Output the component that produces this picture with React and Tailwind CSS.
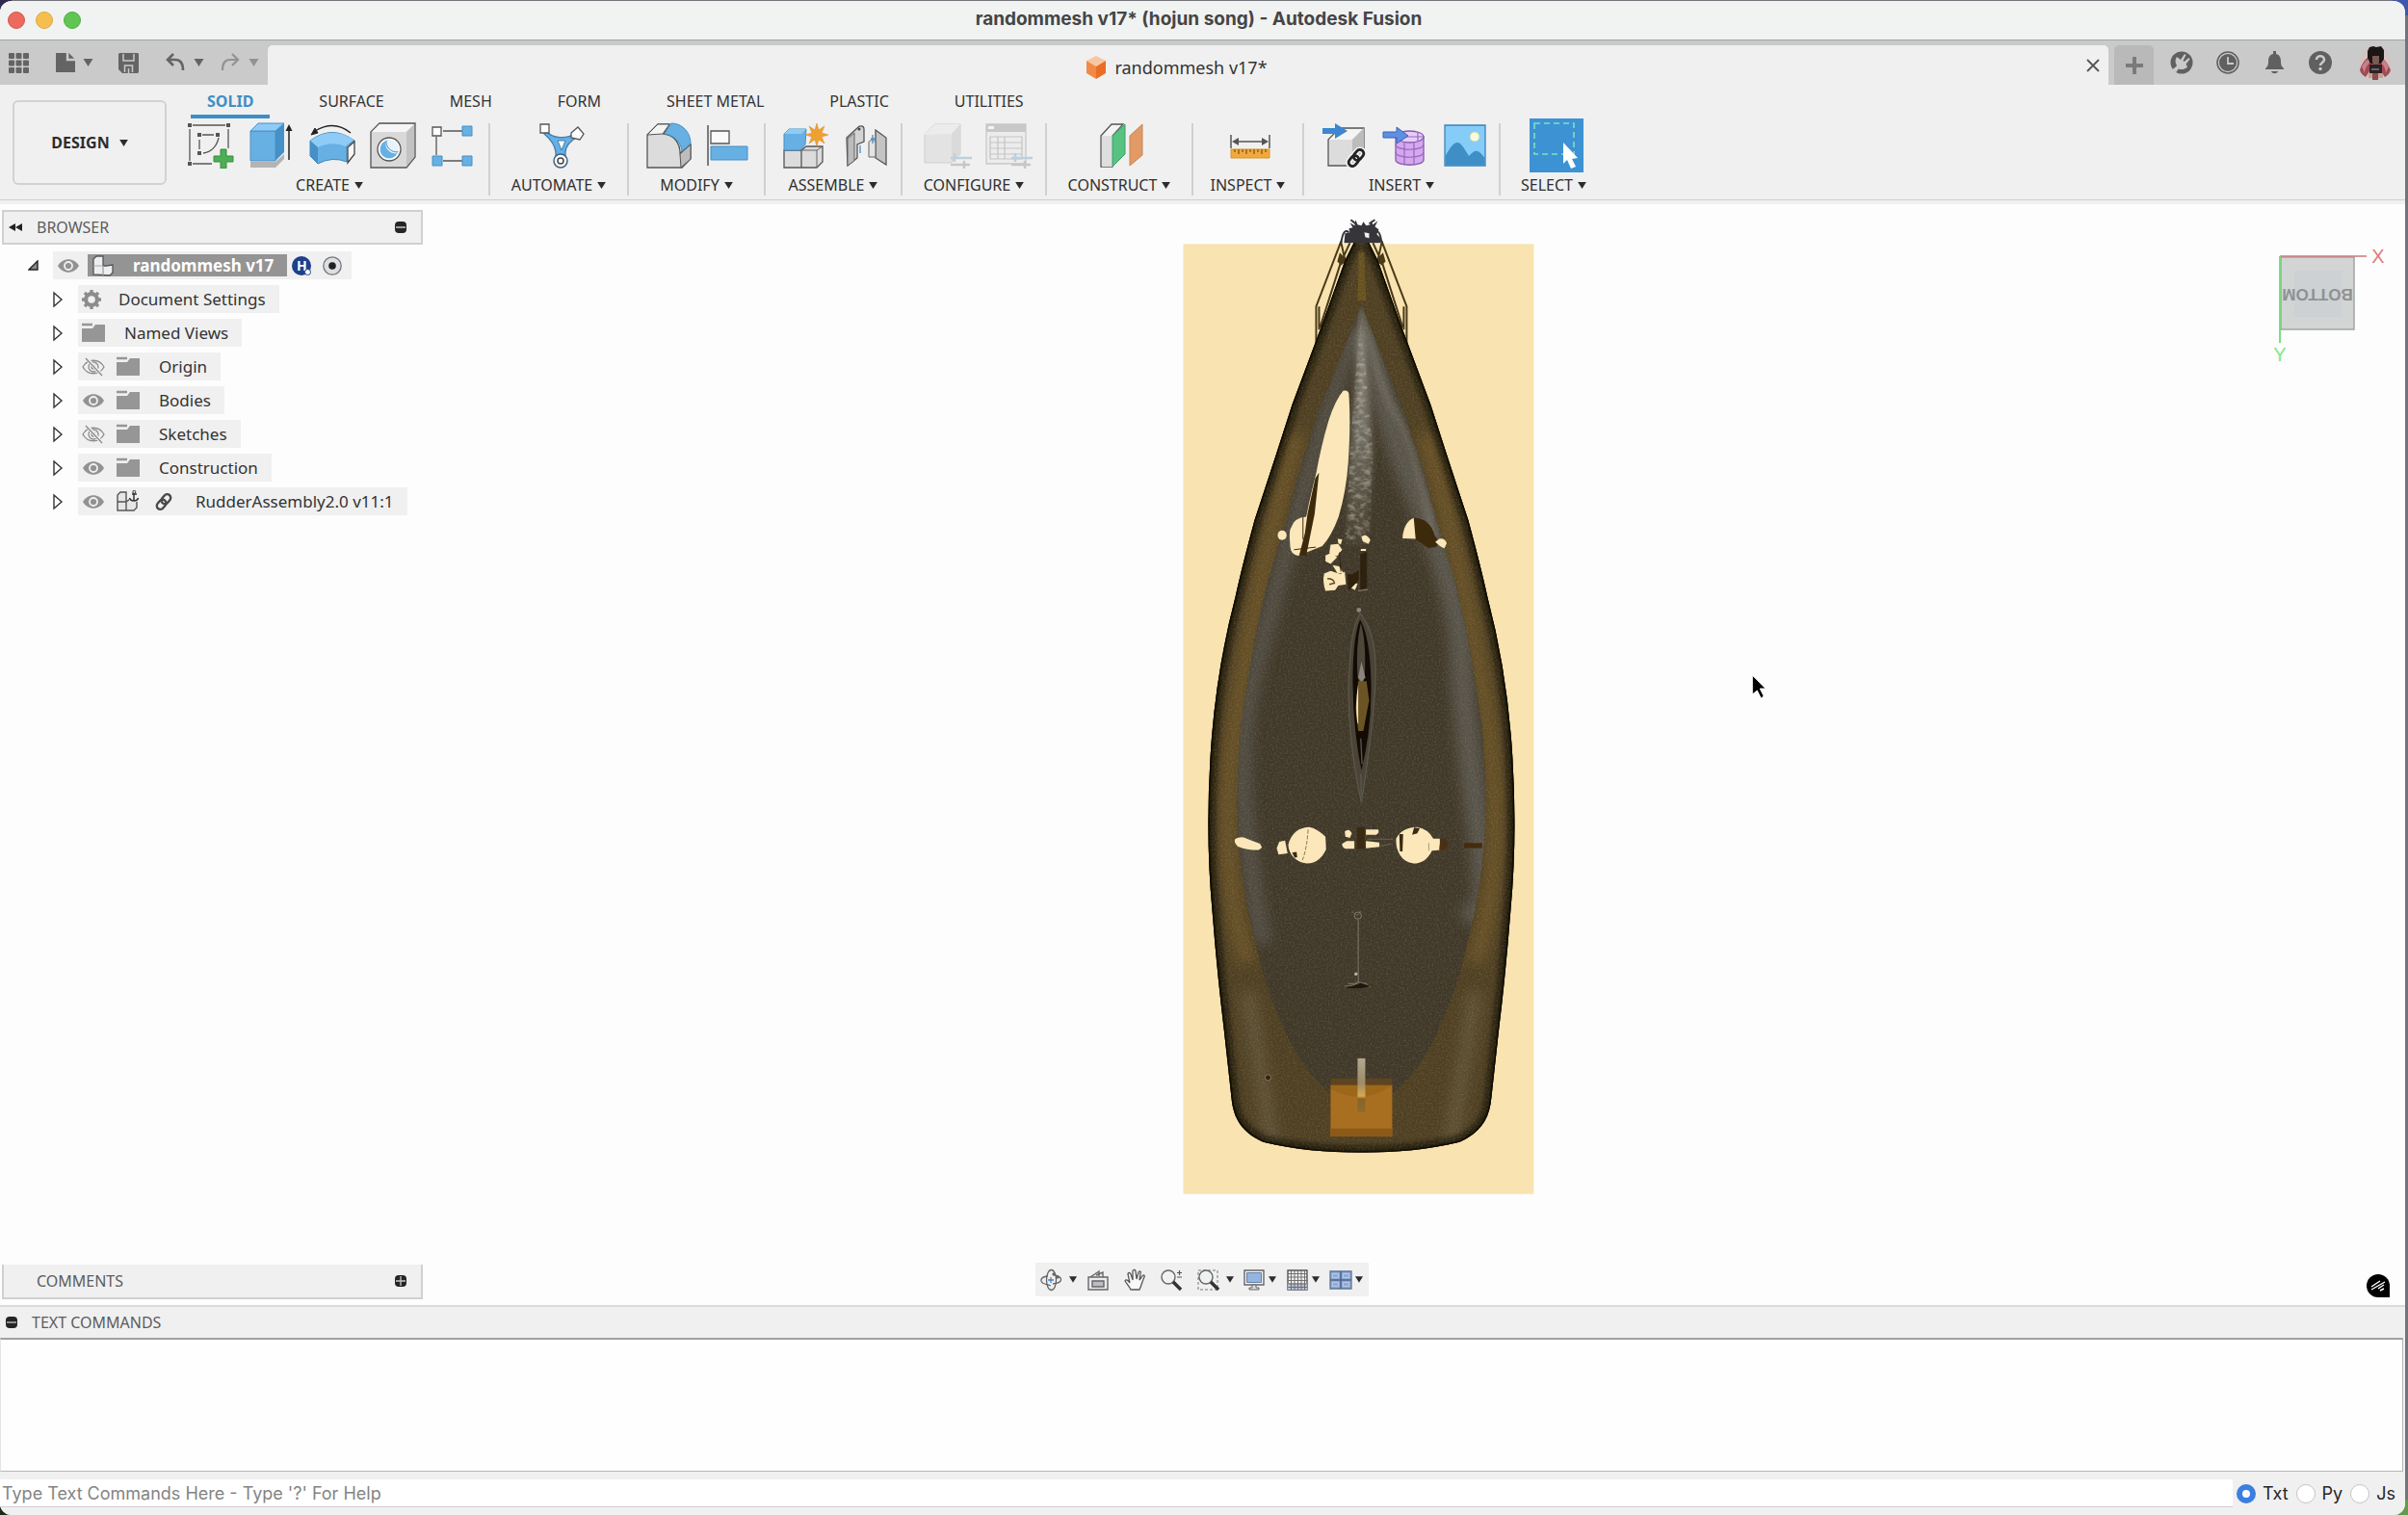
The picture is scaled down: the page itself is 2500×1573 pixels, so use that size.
import { useState } from 'react'
import clsx from 'clsx'

const TABS = ['SOLID', 'SURFACE', 'MESH', 'FORM', 'SHEET METAL', 'PLASTIC', 'UTILITIES']

// ── Small shared glyphs ──────────────────────────────────────────────────────

function Caret({ className = 'w-[10px] h-2 text-[#2c2c2c]' }) {
  return (
    <svg viewBox="0 0 10 8" className={clsx('shrink-0', className)} aria-hidden="true">
      <path d="M0 0h10L5 8z" fill="currentColor" />
    </svg>
  )
}

function Icon({ children, box = 48, className = 'w-12 h-12' }) {
  return (
    <svg viewBox={`0 0 ${box} ${box}`} className={clsx('shrink-0', className)} fill="none" aria-hidden="true">
      {children}
    </svg>
  )
}

// ── Ribbon icons ─────────────────────────────────────────────────────────────

const SketchIcon = () => (
  <Icon>
    <path d="M5 3h34M2 7v33M42 7v20M5 43h20M12 18v10M15 13h12M32 16c-2 9-8 15-16 16" stroke="#555" strokeWidth="1.3" />
    <g fill="#555">
      <path d="M0 1h4v4H0zM40 1h4v4h-4zM0 41h4v4H0zM10 11h4v4h-4zM29 11h4v4h-4zM10 30h4v4h-4z" />
    </g>
    <path d="M34 28h6v7h7v6h-7v7h-6v-7h-7v-6h7z" fill="#4caf50" stroke="#3a8a3e" strokeWidth="1" />
  </Icon>
)

const ExtrudeIcon = () => (
  <Icon>
    <path d="M2 41h26l9-8v5l-9 9H2z" fill="#b4b4b4" />
    <path d="M2 40V9h26v31z" fill="#67b0e4" stroke="#4a90c4" strokeWidth="1" />
    <path d="M2 9l8-8h27l-9 8z" fill="#8ecbf7" stroke="#4a90c4" strokeWidth="1" />
    <path d="M28 9l9-8v30l-9 9z" fill="#4590c6" />
    <path d="M42 39V6" stroke="#222" strokeWidth="1.5" />
    <path d="M42 2l3.500 7h-7z" fill="#222" />
  </Icon>
)

const RevolveIcon = () => (
  <Icon>
    <path d="M1 19Q24 2 47 19l-8 6v16Q24 35 9 43L1 35z" fill="#67b0e4" stroke="#3f86b8" strokeWidth="1" />
    <path d="M1 19Q24 3 46 18l-8 7Q24 19 9 26z" fill="#8ecbf7" />
    <path d="M1 19l8 7v17l-8-8z" fill="#4590c6" />
    <path d="M47 20l-7 6v16l7-9z" fill="#f8f8f8" stroke="#444" strokeWidth="1.300" />
    <path d="M6 9Q26-3 43 11" stroke="#222" strokeWidth="1.400" />
    <path d="M2 13l4-7 3 5z" fill="#222" stroke="#222" />
  </Icon>
)

const HoleIcon = () => (
  <Icon>
    <path d="M1 10l9-9h37v35l-9 11H1z" fill="#d9d9d9" stroke="#555" strokeWidth="1.300" />
    <path d="M2 10l8-8h36l-8 8z" fill="#f6f6f6" />
    <path d="M38 10l8-8v34l-8 10z" fill="#c2c2c2" />
    <circle cx="20" cy="28" r="12" fill="#fff" stroke="#555" strokeWidth="1.300" />
    <circle cx="20" cy="28" r="9.500" fill="#67b0e4" />
    <path d="M17 19a10 10 0 0 0 12 13a9.500 9.500 0 0 0-12-13z" fill="#e8f2fa" />
    <path d="M17 18.800a11 11 0 0 0 12.500 12" stroke="#4590c6" strokeWidth="1" />
  </Icon>
)

const PatternIcon = () => (
  <Icon>
    <path d="M13 9h20M6 15v19M13 40h20" stroke="#555" strokeWidth="1.300" />
    <path d="M2 5h9v9H2z" fill="#fff" stroke="#555" strokeWidth="1.300" />
    <path d="M33 4h10v10H33zM2 35h10v10H2zM33 35h10v10H33z" fill="#67b0e4" stroke="#4590c6" />
  </Icon>
)

const AutomateIcon = () => (
  <Icon>
    <path d="M8 9C14 17 30 18 38 11l2 4c-8 6-12 10-12 16v10H18V31C17 23 12 17 6 12z" fill="#67b0e4" stroke="#3f7fb0" strokeWidth="1.300" />
    <path d="M20 19h8l-4 10z" fill="#fff" stroke="#3f7fb0" />
    <path d="M2 2h9v9H2z" fill="#fff" stroke="#555" strokeWidth="1.300" />
    <path d="M34 11l7-6 6 7-4 6-9-2z" fill="#fff" stroke="#555" strokeWidth="1.300" />
    <circle cx="23" cy="40" r="7" fill="#fff" stroke="#3f5f80" strokeWidth="1.500" />
    <circle cx="23" cy="40" r="3" stroke="#444" strokeWidth="1.500" />
  </Icon>
)

const FilletIcon = () => (
  <Icon>
    <path d="M2 13L13 2h12l-6 10c12 1 17 11 17 20l11-9v15l-9 9H2z" fill="#dcdcdc" stroke="#555" strokeWidth="1.300" />
    <path d="M2 13L13 2h12l-7 10z" fill="#f4f4f4" stroke="#555" />
    <path d="M36 33l11-10v15l-10 9z" fill="#bdbdbd" stroke="#555" />
    <path d="M27 1c12 0 20 10 20 21l-9 8c-1-9-8-17-18-18z" fill="#67b0e4" stroke="#4590c6" />
  </Icon>
)

const AlignIcon = () => (
  <Icon>
    <path d="M2 3v42" stroke="#555" strokeWidth="1.500" />
    <path d="M5 9h19v13H5z" fill="#fafafa" stroke="#555" strokeWidth="1.300" />
    <path d="M5 25h38v14H5z" fill="#67b0e4" stroke="#4590c6" />
  </Icon>
)

const AssembleIcon = () => (
  <Icon>
    <path d="M2 47V29h18v18zM20 47V29l5-4h17v16l-6 6z" fill="#dcdcdc" stroke="#555" strokeWidth="1.300" />
    <path d="M20 29h16v18M36 29l6-4" stroke="#666" />
    <path d="M2 29V12l5-5h18l-1 16-5 6z" fill="#67b0e4" stroke="#4590c6" />
    <path d="M2 12l5-5h18l-5 5z" fill="#8ecbf7" />
    <path d="M36 1l2 7 6-4-3 7 7 2-7 2 3 7-6-4-2 7-2-7-6 4 3-7-7-2 7-2-3-7 6 4z" fill="#f0a030" stroke="#d08820" strokeWidth=".5" />
  </Icon>
)

const JointIcon = () => (
  <Icon>
    <path d="M4 16L15 6c2-3 7-3 7 1v13l-7 3v14L5 45z" fill="#d4d4d4" stroke="#555" strokeWidth="1.300" />
    <path d="M5 17l7-6v29l-7 5z" fill="#bcbcbc" stroke="#666" />
    <path d="M34 8l11 8v28l-11-7z" fill="#c4c4c4" stroke="#555" strokeWidth="1.300" />
    <path d="M27 20c2-2 5-2 7 0v16h-7z" fill="#e4e4e4" stroke="#666" />
    <path d="M18 24v8M31 13v9M29 17h5" stroke="#4590c6" strokeWidth="1.300" />
    <circle cx="17" cy="7" r="1.500" fill="#444" />
  </Icon>
)

const PlusMinus = () => (
  <g strokeWidth="2.500">
    <path d="M29 37h22M33 32v9" stroke="#bdd0dc" />
    <path d="M29 44h20M43 40v8" stroke="#c6c6c6" />
  </g>
)

const ConfigureIcon = () => (
  <Icon className="w-12 h-12 overflow-visible">
    <path d="M2 13L12 2h27v31l-9 9H2z" fill="#e3e3e3" stroke="#cfcfcf" />
    <path d="M2 13L12 2h27l-9 10z" fill="#ececec" />
    <path d="M30 12l9-10v31l-9 9z" fill="#dadada" />
    <PlusMinus />
  </Icon>
)

const ConfigTableIcon = () => (
  <Icon className="w-12 h-12 overflow-visible">
    <path d="M3 2h41v41H3z" fill="#ececec" stroke="#c8c8c8" strokeWidth="1.300" />
    <path d="M3 2h41v8H3z" fill="#c8c8c8" />
    <path d="M5 4h6v3H5z" fill="#f4f4f4" />
    <path d="M7 15h33v23H7zM7 21h33M7 27h33M7 33h33M15 15v23M22 15v23" stroke="#c4c4c4" strokeWidth="1.200" />
    <PlusMinus />
  </Icon>
)

const ConstructIcon = () => (
  <Icon>
    <path d="M2 14L13 2h12L14 14v32H2z" fill="#f4f4f4" stroke="#555" strokeWidth="1.300" />
    <path d="M3 14h11v32H3z" fill="#dedede" />
    <path d="M14 14L27 2v31L14 46z" fill="#58c283" stroke="#3ba066" />
    <path d="M32 14L45 2v32L32 45z" fill="#e29a66" stroke="#c98350" />
  </Icon>
)

const InspectIcon = () => (
  <Icon>
    <path d="M4 13v14M44 13v14M8 20h32" stroke="#555" strokeWidth="1.500" />
    <path d="M5 20l7-4v8zM43 20l-7-4v8z" fill="#555" />
    <path d="M4 28h40v9H4z" fill="#f0a93c" stroke="#d8922a" />
    <path d="M8 28v3M12 28v5M16 28v3M20 28v5M24 28v3M28 28v5M32 28v3M36 28v5M40 28v3" stroke="#7a5418" strokeWidth="1.200" />
  </Icon>
)

const ChainPath = (props) => (
  <g {...props}>
    <rect x="-10" y="-4" width="12" height="8" rx="4" />
    <rect x="-2" y="-4" width="12" height="8" rx="4" />
  </g>
)

const InsertDeriveIcon = () => (
  <Icon className="w-12 h-12 overflow-visible">
    <path d="M8 18L20 6h25v26L32 45H8z" fill="#dcdcdc" stroke="#555" strokeWidth="1.300" />
    <path d="M9 18L20 7h24L33 18z" fill="#f4f4f4" />
    <path d="M33 18L45 6v26L33 45z" fill="#bcbcbc" />
    <path d="M2 6h13V1l13 8-13 8v-5H2z" fill="#3c86d2" />
    <ChainPath transform="translate(37 37) rotate(-50)" stroke="#f0f0f0" strokeWidth="6" />
    <ChainPath transform="translate(37 37) rotate(-50)" stroke="#222" strokeWidth="2.800" />
  </Icon>
)

const InsertMeshIcon = () => (
  <Icon>
    <path d="M15 15v24c0 7 29 7 29 0V15z" fill="#d3a8ee" stroke="#8a58b0" strokeWidth="1.300" />
    <ellipse cx="29.500" cy="15" rx="14.500" ry="6" fill="#e6cdf7" stroke="#8a58b0" strokeWidth="1.300" />
    <path d="M15 23c0 7 29 7 29 0M15 31c0 7 29 7 29 0M24 20v24M34 20v24M20 11v9M38 11v9M15 15h29" stroke="#9a66c0" strokeWidth="1.200" />
    <path d="M2 10h14V5l12 9-12 8v-6H2z" fill="#5f8fe0" stroke="#3a62b8" />
  </Icon>
)

const InsertImageIcon = () => (
  <Icon>
    <path d="M3 3h42v42H3z" fill="#86ccf8" stroke="#3b83b8" strokeWidth="1.300" />
    <circle cx="34" cy="15" r="5" fill="#fbfbdc" stroke="#bcd8b0" />
    <path d="M3.600 35C8 27 12 21 16 21s7 6 12 14c4-4 6-6 9-5s5 4 7.400 7v7.400H3.600z" fill="#3f8fc6" />
  </Icon>
)

const SelectIcon = () => (
  <Icon box={56} className="w-14 h-14">
    <path d="M0 0h56v56H0z" fill="#3d92d4" />
    <path d="M5 5h41v32H5z" stroke="#7fe0bc" strokeWidth="1.600" strokeDasharray="6 4" />
    <path d="M35 25l15 16-6 1 4 8-5 2-4-9-4 4z" fill="#fff" />
  </Icon>
)

const GROUPS = [
  { label: 'CREATE', width: 'w-[332px]', icons: [SketchIcon, ExtrudeIcon, RevolveIcon, HoleIcon, PatternIcon] },
  { label: 'AUTOMATE', width: 'w-36', icons: [AutomateIcon] },
  { label: 'MODIFY', width: 'w-[142px]', icons: [FilletIcon, AlignIcon] },
  { label: 'ASSEMBLE', width: 'w-[142px]', icons: [AssembleIcon, JointIcon] },
  { label: 'CONFIGURE', width: 'w-[150px]', icons: [ConfigureIcon, ConfigTableIcon] },
  { label: 'CONSTRUCT', width: 'w-[152px]', icons: [ConstructIcon] },
  { label: 'INSPECT', width: 'w-[115px]', icons: [InspectIcon] },
  { label: 'INSERT', width: 'w-[204px]', icons: [InsertDeriveIcon, InsertMeshIcon, InsertImageIcon] },
  { label: 'SELECT', width: 'w-[110px]', icons: [SelectIcon] },
]

// ── Title bar and document tabs ──────────────────────────────────────────────

function TitleBar() {
  return (
    <header className="grid grid-cols-[1fr_auto_1fr] items-center h-10 pl-2 pr-4 bg-[#f1f3f2]">
      <div className="flex gap-[11px]">
        <button type="button" aria-label="Close" className="size-[18px] rounded-full bg-[#ec6a5e] border border-[#d5574c]" />
        <button type="button" aria-label="Minimize" className="size-[18px] rounded-full bg-[#f5bf4f] border border-[#dea640]" />
        <button type="button" aria-label="Zoom" className="size-[18px] rounded-full bg-[#61c554] border border-[#4fac42]" />
      </div>
      <h1 className="pb-[2px] font-[Inter,sans-serif] font-bold text-[19px] leading-6 text-[#454545]">
        randommesh v17* (hojun song) - Autodesk Fusion
      </h1>
    </header>
  )
}

function QuickAccess() {
  return (
    <div className="flex items-center w-[278px] h-full pl-[9px] text-[#646464]">
      <button type="button" aria-label="Data panel" className="mr-7">
        <Icon box={21} className="w-[21px] h-[21px]">
          {[0, 7.5, 15].map((y) =>
            [0, 7.5, 15].map((x) => <rect key={`${x}-${y}`} x={x} y={y} width="6" height="6" rx="1" fill="#646464" />)
          )}
        </Icon>
      </button>
      <button type="button" aria-label="File" className="flex items-center gap-2 mr-[26px]">
        <Icon box={24} className="w-5 h-6">
          <path d="M0 0h13v10h11v14H0z" fill="#646464" />
          <path d="M16 0l7 7h-7z" fill="#646464" />
        </Icon>
        <Caret className="w-[11px] h-2" />
      </button>
      <button type="button" aria-label="Save" className="mr-7">
        <Icon box={21} className="w-[21px] h-[21px]">
          <path d="M1 0h19l1 1v19l-1 1H4l-4-4V1z" fill="#646464" />
          <path d="M5 1v7h11V1M6.500 20v-7h8v7M10.500 16v5" stroke="#cacaca" strokeWidth="1.500" />
        </Icon>
      </button>
      <button type="button" aria-label="Undo" className="flex items-center gap-[9px] mr-[17px]">
        <Icon box={20} className="w-5 h-5">
          <path d="M2 7h8c6 0 8 4 8 11M8 1L2 7l6 6" stroke="#646464" strokeWidth="2.600" />
        </Icon>
        <Caret className="w-[11px] h-2" />
      </button>
      <button type="button" aria-label="Redo" className="flex items-center gap-[9px] text-[#929292]">
        <Icon box={20} className="w-5 h-5">
          <path d="M18 7h-8c-6 0-8 4-8 11M12 1l6 6-6 6" stroke="#929292" strokeWidth="2.200" />
        </Icon>
        <Caret className="w-[11px] h-2" />
      </button>
    </div>
  )
}

function Avatar() {
  return (
    <Icon box={36} className="w-9 h-9">
      <circle cx="18" cy="18" r="17" fill="#d3c4c4" />
      <path d="M2 26c2-8 7-13 11-15h10c5 4 9 9 11 15-1 3-3 5-6 7l-4-6H12l-4 6c-3-2-5-4-6-7z" fill="#a04a54" />
      <path d="M4 22c3-5 5-7 8-8v4c-3 3-5 7-5 11zM32 22c-3-5-5-7-8-8v4c3 3 5 7 5 11z" fill="#c98088" />
      <path d="M12 2l4-1 3 1 5-1 3 4v9l-3 5H13l-3-6V6z" fill="#1c1516" />
      <path d="M15 11h7v7l-3 3-4-3z" fill="#7c5a54" />
      <path d="M12 20h13v9H12z" fill="#2b2224" />
      <path d="M14 25h8" stroke="#aaa" />
      <path d="M11 29h4v5h-4zM21 29h5v5h-5z" fill="#c9a08c" />
      <path d="M15 29h6v7h-6z" fill="#8a4a50" />
    </Icon>
  )
}

function DocumentTabs() {
  return (
    <div className="flex items-center h-[47px] bg-[#cacaca] border-t border-[#a4a4a4]">
      <QuickAccess />
      <div className="flex items-center self-end flex-1 h-[41px] pr-2 rounded-t-[5px] bg-[#f0f0f0]">
        <span className="flex flex-1 items-center justify-center gap-2 pt-1 text-[18px] leading-6 text-[#333]">
          <Icon box={22} className="w-[22px] h-6">
            <path d="M11-1l10 5-10 6L1 4z" fill="#f7c7a1" />
            <path d="M1 4l10 6v13L1 17z" fill="#f08a45" />
            <path d="M21 4l-10 6v13l10-6z" fill="#ea6d26" />
          </Icon>
          randommesh v17*
        </span>
        <button type="button" aria-label="Close document">
          <Icon box={16} className="w-4 h-4">
            <path d="M2 2l12 12M14 2L2 14" stroke="#555" strokeWidth="1.800" />
          </Icon>
        </button>
      </div>
      <button type="button" aria-label="New document" className="flex items-center justify-center self-end w-[41px] h-[41px] ml-[6px] mr-[17px] rounded-t-[5px] bg-[#b9b9b9]">
        <Icon box={18} className="w-[18px] h-[18px]">
          <path d="M9 0v18M0 9h18" stroke="#7a7a7a" strokeWidth="4" />
        </Icon>
      </button>
      <div className="flex items-center gap-6 pr-[13px]">
        <button type="button" aria-label="Extensions">
          <Icon box={24} className="w-6 h-6">
            <circle cx="12" cy="12" r="11.500" fill="#606060" />
            <path d="M2 19c3-1 4-3 5-4-2-3-2-6 0-9l4 3 4-6 1.500 1-3 6 1 1 5-4 1 1.500-4 5 1.500 3c-3 3-7 3-9 2-1 1-2 2-3 4z" fill="#cacaca" />
          </Icon>
        </button>
        <button type="button" aria-label="Job status">
          <Icon box={24} className="w-6 h-6">
            <circle cx="12" cy="12" r="11" stroke="#606060" strokeWidth="1.600" />
            <circle cx="12" cy="12" r="9" fill="#606060" />
            <path d="M12 6v7h6" stroke="#cacaca" strokeWidth="1.800" />
          </Icon>
        </button>
        <button type="button" aria-label="Notifications">
          <Icon box={24} className="w-6 h-6">
            <path d="M11 0h3v3c4 1 5 4 5 8 0 4 1 5 3 7v1H3v-1c2-2 3-3 3-7 0-4 1-7 5-8zM9 21h7c-1 3-6 3-7 0z" fill="#606060" />
          </Icon>
        </button>
        <button type="button" aria-label="Help">
          <Icon box={24} className="w-6 h-6">
            <circle cx="12" cy="12" r="12" fill="#606060" />
            <path d="M8 9c0-5 8-5 8 0 0 3-4 3-4 6" stroke="#cacaca" strokeWidth="2.600" />
            <circle cx="12" cy="18.500" r="1.700" fill="#cacaca" />
          </Icon>
        </button>
        <button type="button" aria-label="Account" className="ml-[3px]">
          <Avatar />
        </button>
      </div>
    </div>
  )
}

// ── Ribbon ───────────────────────────────────────────────────────────────────

function Ribbon() {
  const [tab, setTab] = useState('SOLID')

  return (
    <div className="bg-[#f0f0f0] pb-1">
      <div className="flex h-[120px] border-b border-[#cfcfcf]">
        <button
          type="button"
          className="flex items-center justify-center gap-[10px] w-40 h-[88px] mt-4 ml-[13px] rounded-md border-2 border-[#d2d2d2] text-[16px] font-bold text-[#2c2c2c]"
        >
          DESIGN <Caret className="w-[9px] h-[7px] text-[#2c2c2c]" />
        </button>

        <div className="flex flex-col">
          <nav className="flex h-[35px] pl-[25px] gap-[34px]">
            {TABS.map((name) => (
              <button
                key={name}
                type="button"
                onClick={() => setTab(name)}
                className={clsx(
                  'px-[17px] pt-1 border-b-4 text-[16px] leading-[27px] whitespace-nowrap',
                  tab === name ? 'border-[#3e8fc4] text-[#3e8fc4] font-bold' : 'border-transparent text-[#333]'
                )}
              >
                {name}
              </button>
            ))}
          </nav>

          <div className="flex pl-1">
            {GROUPS.map(({ label, width, icons }) => (
              <section
                key={label}
                className={clsx('flex flex-col items-center mt-[5px] h-[75px] border-r-2 border-[#d0d0d0] last:border-r-0', width)}
              >
                <div className="flex items-center gap-[15px] h-[46px] pl-[5px]">
                  {icons.map((Glyph, i) => (
                    <button key={i} type="button" aria-label={`${label} ${i + 1}`}>
                      <Glyph />
                    </button>
                  ))}
                </div>
                <button type="button" className="flex items-center gap-[5px] mt-[6px] text-[16px] leading-6 text-[#2f2f2f]">
                  {label} <Caret className="w-[9px] h-[7px] text-[#2c2c2c]" />
                </button>
              </section>
            ))}
          </div>
        </div>
      </div>
    </div>
  )
}

// ── Browser tree ─────────────────────────────────────────────────────────────

const EyeIcon = ({ off }) => (
  <Icon box={24} className="w-6 h-6">
    {off ? (
      <g stroke="#8c8c8c" strokeWidth="1.300">
        <path d="M1 12C6 3 18 3 23 12C18 21 6 21 1 12z" />
        <circle cx="12" cy="12" r="5" />
        <circle cx="12" cy="12" r="2" />
        <path d="M4 2l17 19" stroke="#f0f0f0" strokeWidth="3.500" />
        <path d="M4 3l17 18" />
      </g>
    ) : (
      <>
        <path d="M1 12C6 3 18 3 23 12C18 21 6 21 1 12z" fill="#929292" />
        <circle cx="12" cy="12" r="4" stroke="#f0f0f0" strokeWidth="1.800" />
      </>
    )}
  </Icon>
)

const FolderIcon = () => (
  <Icon box={24} className="w-6 h-6">
    <path d="M0 7h11l3-4h10v18H0z" fill="#969696" />
    <path d="M0 3h11" stroke="#969696" strokeWidth="2.500" />
  </Icon>
)

const GearIcon = () => (
  <Icon box={24} className="w-5 h-5">
    <circle cx="12" cy="12" r="7" stroke="#8c8c8c" strokeWidth="5" />
    <path d="M12 0v5M12 19v5M0 12h5M19 12h5M3.500 3.500L7 7M17 17l3.500 3.500M20.500 3.500L17 7M7 17l-3.500 3.500" stroke="#8c8c8c" strokeWidth="4" />
  </Icon>
)

const AnchoredPartIcon = () => (
  <Icon box={24} className="w-6 h-6">
    <path d="M1 12V5l3-3h6v10M1 12h9v9H1zM10 12l3-2h8v8l-3 3h-8" fill="#e6e6e6" stroke="#555" strokeWidth="1.400" />
    <path d="M13 0h11v12H13z" fill="#f0f0f0" />
    <path d="M18 3v8M16 4h5M13.500 8c1 4 8 4 9 0" stroke="#333" strokeWidth="1.500" />
    <circle cx="18.300" cy="1.800" r="1.500" stroke="#333" />
  </Icon>
)

const LinkIcon = () => (
  <Icon box={24} className="w-[22px] h-[22px]">
    <ChainPath transform="translate(12 12) rotate(-50)" stroke="#4a4a4a" strokeWidth="2.600" />
  </Icon>
)

const TREE = [
  { label: 'Document Settings', icon: GearIcon, gap: 'ml-[18px]' },
  { label: 'Named Views', icon: FolderIcon, gap: 'ml-5' },
  { label: 'Origin', eye: 'off', icon: FolderIcon, gap: 'ml-5' },
  { label: 'Bodies', eye: 'on', icon: FolderIcon, gap: 'ml-5' },
  { label: 'Sketches', eye: 'off', icon: FolderIcon, gap: 'ml-5' },
  { label: 'Construction', eye: 'on', icon: FolderIcon, gap: 'ml-5' },
  { label: 'RudderAssembly2.0 v11:1', eye: 'on', icon: AnchoredPartIcon, linked: true, gap: 'ml-[22px]' },
]

function PanelToggle({ plus, label }) {
  return (
    <button type="button" aria-label={label}>
      <Icon box={12} className="w-3 h-3">
        <rect width="12" height="12" rx="4" fill="#252525" />
        <path d={plus ? 'M1 6h10M6 1v10' : 'M1 6h10'} stroke="#c8c8c8" strokeWidth="1.300" />
      </Icon>
    </button>
  )
}

function BrowserPanel() {
  return (
    <aside className="w-[437px] ml-[2px] mt-[6px]">
      <div className="flex items-center h-9 pl-[5px] pr-[15px] bg-[#f0f0f0] border-2 border-[#d0d0d0]">
        <button type="button" aria-label="Collapse browser" className="mr-[15px]">
          <Icon box={14} className="w-[14px] h-[14px]">
            <path d="M7 3v8L0 7zM14 3v8L7 7z" fill="#222" />
          </Icon>
        </button>
        <h2 className="flex-1 text-[16px] leading-6 text-[#5c5c5c]">BROWSER</h2>
        <PanelToggle label="Minimize browser" />
      </div>

      <ul className="flex flex-col gap-[6px] mt-[7px] text-[17px] leading-[29px] text-[#333]">
        <li className="flex items-center h-[29px] pl-[27px]">
          <button type="button" aria-label="Collapse randommesh" className="mr-[15px]">
            <Icon box={11} className="w-[11px] h-[11px]">
              <path d="M1 10h9V1z" fill="#8a8a8a" stroke="#222" strokeWidth="1.400" />
            </Icon>
          </button>
          <div className="flex items-center h-full pl-1 pr-[10px] bg-[#f0f0f0]">
            <EyeIcon />
            <div className="flex items-center h-[23px] ml-2 pl-[5px] pr-[14px] bg-[#949494] text-white font-bold">
              <Icon box={22} className="w-[22px] h-[22px]">
                <path d="M1 20V4l3-3h7v10h3l7-1v8l-3 3z" fill="#eceef2" stroke="#555" strokeWidth="1.300" />
                <path d="M1 11h10v10M11 11v9" stroke="#aaa" />
              </Icon>
              <span className="ml-5">randommesh v17</span>
            </div>
            <span className="relative flex items-center justify-center size-5 ml-[5px] rounded-full bg-[#1f3f8c] text-white text-[14px] font-bold leading-5">
              H
              <i className="absolute right-0 bottom-0 size-[7px] rounded-full bg-white border border-[#1f3f8c]" />
            </span>
            <Icon box={20} className="w-5 h-5 ml-3">
              <circle cx="10" cy="10" r="9.200" fill="#dcdfe3" stroke="#777" strokeWidth="1.300" />
              <circle cx="10" cy="10" r="3.800" fill="#222" />
            </Icon>
          </div>
        </li>

        {TREE.map(({ label, eye, icon: Glyph, linked, gap }) => (
          <li key={label} className="flex items-center h-[29px] pl-[53px]">
            <button type="button" aria-label={`Expand ${label}`} className="mr-4">
              <svg viewBox="0 0 10 14" className="w-[10px] h-[14px] overflow-visible" aria-hidden="true">
                <path d="M1 0l8 7-8 7z" fill="#fff" stroke="#333" strokeWidth="1.400" />
              </svg>
            </button>
            <div className="flex items-center h-full pl-1 pr-[14px] bg-[#f0f0f0]">
              {eye && (
                <span className="mr-3">
                  <EyeIcon off={eye === 'off'} />
                </span>
              )}
              <Glyph />
              {linked && <span className="ml-[14px]"><LinkIcon /></span>}
              <span className={gap}>{label}</span>
            </div>
          </li>
        ))}
      </ul>
    </aside>
  )
}

// ── Viewport drawing ─────────────────────────────────────────────────────────

// Port half of the hull; the starboard half is the same curve flipped round x = 1414
const HULL_EDGE =
  'M1407 250L1397 270L1373 337L1342 420L1325 473L1303 540Q1290 588 1283 620Q1262 700 1257 787Q1252 870 1259 945Q1264 1010 1271 1067L1279 1140C1281 1162 1290 1176 1312 1186C1345 1194 1380 1197 1414 1197'
const HALF_HULL = `${HULL_EDGE}H1416V250z`
const HALF_KEEL =
  'M1416 318H1413L1393 370L1372 420L1350 487L1337 537L1317 603Q1302 660 1289 753Q1283 820 1286 870Q1291 935 1310 1003C1326 1060 1356 1130 1400 1145L1416 1148z'
const MIRROR = 'matrix(-1 0 0 1 2828 0)'
const SIDES = [undefined, MIRROR]

function HullDrawing() {
  return (
    <svg viewBox="0 212 2498 1143" className="absolute inset-0 w-full h-full" aria-label="Boat hull mesh, bottom view" role="img">
      <defs>
        <clipPath id="hull">
          <path d={HALF_HULL} />
          <path d={HALF_HULL} transform={MIRROR} />
        </clipPath>
        <clipPath id="keel">
          <path d={HALF_KEEL} />
          <path d={HALF_KEEL} transform={MIRROR} />
        </clipPath>
        <filter id="soft" x="-30%" y="-10%" width="160%" height="120%">
          <feGaussianBlur stdDeviation="7" />
        </filter>
        <filter id="softer" x="-80%" y="-10%" width="260%" height="120%">
          <feGaussianBlur stdDeviation="3" />
        </filter>
        <filter id="grain" x="0" y="0" width="100%" height="100%">
          <feTurbulence type="fractalNoise" baseFrequency=".55" numOctaves="2" seed="4" />
          <feColorMatrix values="0 0 0 0 .75  0 0 0 0 .68  0 0 0 0 .5  .9 0 0 0 -.36" />
        </filter>
        <filter id="ripple" x="-20%" y="0" width="140%" height="100%">
          <feTurbulence type="fractalNoise" baseFrequency=".12 .22" numOctaves="2" seed="9" result="n" />
          <feColorMatrix in="n" values="0 0 0 0 .7  0 0 0 0 .68  0 0 0 0 .64  3 0 0 0 -1.300" />
          <feComposite in2="SourceGraphic" operator="in" />
        </filter>
        <linearGradient id="spine" x1="0" y1="0" x2="0" y2="1">
          <stop offset="0" stopColor="#b4b1a6" />
          <stop offset=".5" stopColor="#827f74" />
          <stop offset="1" stopColor="#4b4333" />
        </linearGradient>
        <linearGradient id="post" x1="0" y1="0" x2="0" y2="1">
          <stop offset="0" stopColor="#b3a88f" />
          <stop offset=".45" stopColor="#9c8c68" />
          <stop offset=".7" stopColor="#d8a850" />
          <stop offset=".75" stopColor="#876428" />
          <stop offset="1" stopColor="#8f6a2e" />
        </linearGradient>
      </defs>

      <path d="M1229 253h364v987h-364z" fill="#f8e3b1" />

      {/* pulpit rails */}
      <g stroke="#4a3a18" strokeWidth="2" fill="none">
        {SIDES.map((t, i) => (
          <g key={i} transform={t}>
            <path d="M1393 250L1367 318V360M1402 252L1392 274L1371 340M1393 252l4 18M1370 318v24" />
            <path d="M1392 264l6 6-5 4-3-3z" fill="#4a3a18" />
          </g>
        ))}
      </g>

      <g clipPath="url(#hull)">
        <path d="M1240 240h350v970h-350z" fill="#4e3f22" />
        {SIDES.map((t, i) => (
          <g key={i} transform={t} fill="none" filter="url(#soft)">
            <path d="M1348 450Q1300 620 1282 760T1296 1000" stroke="#6a5228" strokeWidth="16" />
            <path d="M1322 1195Q1312 1130 1296 1030" stroke="#736a50" strokeWidth="14" opacity=".5" />
          </g>
        ))}
        {SIDES.map((t, i) => (
          <path key={i} d={HULL_EDGE} transform={t} fill="none" stroke="#0d0804" strokeWidth="12" opacity=".8" filter="url(#softer)" />
        ))}
        <path d="M1411 262h6l2 50h-9z" fill="#66501f" />
      </g>

      <g clipPath="url(#keel)">
        <path d="M1270 300h290v860h-290z" fill="#3f3728" />
        <g fill="none" filter="url(#soft)">
          <path d="M1408 340Q1370 450 1345 540T1302 700T1294 860T1312 980" stroke="#605e58" strokeWidth="18" opacity=".6" />
          <path d="M1416 340Q1440 440 1478 530T1518 680T1536 860T1524 940" stroke="#68665f" strokeWidth="24" opacity=".65" />
        </g>
        <path d="M1414 320Q1432 400 1450 430T1490 560" stroke="#838075" strokeWidth="7" fill="none" opacity=".5" filter="url(#softer)" />
        <path d="M1413 315L1420 390L1426 470L1420 565H1398L1402 470L1409 390z" fill="url(#spine)" opacity=".75" filter="url(#softer)" />
        <path d="M1413 335L1419 390L1426 470L1422 565H1398L1402 470L1408 390z" fill="#fff" filter="url(#ripple)" opacity=".4" />
      </g>

      <g clipPath="url(#hull)">
        <path d="M1250 250h330v950h-330z" filter="url(#grain)" opacity=".35" />
        {SIDES.map((t, i) => (
          <path key={i} d={HULL_EDGE} transform={t} fill="none" stroke="#120b04" strokeWidth="3" />
        ))}
      </g>

      {/* bow fittings */}
      <path d="M1396 252l1-10 5-1-1-4 4-1-3-5 5 3 1-6 2 5 4 1 2-4 3 4 4-1 1-4 2 4 5-4-3 6 4 3-2 5 4 4v5z" fill="#35353a" />
      <path d="M1417 241l5 1v5l-4-1z" fill="#f2f2f2" />
      <g stroke="#35353a" strokeWidth="2" fill="none">
        <path d="M1393 252q2-16 8-11M1435 252q-2-16-8-11M1408 232l-5-4M1422 232l6-4" />
      </g>

      {/* openings around the bow thruster */}
      <g transform="translate(1220 220) scale(.33333)" fill="#fbe7ba">
        <path d="M525 557q16-4 18 10q6 90-2 212q-6 90-30 170q-22 60-51 92q-40 16-75 30q-24-4-25-30q-4-50 2-56q10-34 48-36q14-70 30-130q16-90 40-170q20-62 45-92z" />
        <path d="M450 812l-14 130-26 128h-22l18-70 8-60 24-110z" fill="#3d2a0c" />
        <path d="M400 950v70M372 1052l68-8" stroke="#3d2a0c" strokeWidth="3" />
        <ellipse cx="335" cy="1007" rx="14" ry="15" />
        <path d="M745 953q-32 14-35 64l45 1 8-50z" />
        <path d="M745 953q50 0 66 56l14 18-10 16-24 4-40-27z" fill="#3d2a0c" />
        <path d="M812 1028l12-10q18-4 24 14l-8 16-14-8z" />
        <path d="M582 1012q14-14 28 10l-6 12-18-8zM508 1018l14 2-4 16-8-4zM486 1036l24-2 12 18-16 20-24-10zM470 1070l20-10 16 16-20 20-16-8zM492 1100l20 4 14 20-18 2zM580 1050h16v6h-16z" />
        <path d="M466 1126l20-8 30 10 14-8 4 40-24 4-10 14-30 2q-10-30-4-54zM540 1150l30 8-8 20-16-10z" />
        <path d="M476 1142q20 0 22 14l-16 4" fill="none" stroke="#574626" strokeWidth="4" />
        <path d="M580 1066l18-6v110l-18 6zM540 1130h14l18-12v30l-30 30zM514 1060l4 60" fill="#2e220f" stroke="#2e220f" strokeWidth="3" />
        <path d="M530 1000l14 8M536 1014l10-6M572 1180l30-4" stroke="#8a8678" strokeWidth="3" />
      </g>

      {/* keel slot, mid openings and skeg */}
      <g transform="translate(1220 620) scale(.33333)">
        <path d="M578 50Q628 110 626 240T582 640Q530 400 546 200Q550 100 578 50z" fill="#4a4336" stroke="#5b564c" strokeWidth="4" />
        <path d="M578 70Q608 120 612 260T582 540Q550 380 556 210Q560 110 578 70z" fill="#120b05" />
        <path d="M580 80q18 60 12 170l-10 30-12-30q-6-100 10-170z" fill="#4d463a" />
        <path d="M582 200l12 50-12 16-10-16z" fill="#8a867c" />
        <path d="M572 262h26l8 60-18 95h-16l-8-70z" fill="#6a5424" />
        <path d="M572 272q-10 60-3 118l3 6z" fill="#fbe7ba" />
        <path d="M580 440l4 80M580 550l2 70" stroke="#5b564c" strokeWidth="4" />
        <circle cx="574" cy="40" r="7" fill="#8a8678" />

        <g fill="#fbe7ba">
          <path d="M188 754q20-12 40 0l38 14 6 12-10 8q-40 0-66-12-12-12-8-22z" />
          <path d="M318 782l8-20 18-4 8 40-28 4zM354 772c8-38 36-56 66-56q26 6 50 30l2 40c-14 28-30 42-60 44c-34-4-56-28-58-58z" />
          <path d="M530 730q14-12 22 6l-6 14-14-4zM522 768l14-8h24v24h-28q-12-6-10-16zM596 724h38q6 10-6 16h-32zM596 760l42 4v14l-42 4z" />
          <path d="M690 752c12-24 36-36 66-36q34 6 50 36h20l2 36-26 2c-14 28-32 40-58 40c-36-6-56-38-54-78z" />
        </g>
        <path d="M416 724q-4 60-18 96" stroke="#4a3c20" strokeWidth="2" strokeDasharray="12 5" fill="none" />
        <path d="M366 796l14-2 2 16-8 2zM568 716h24v68h-24zM700 738h12l-2 54h-8zM740 740l6-22 18 2-8 16z" fill="#3a2a12" />
        <path d="M828 752l18 2 6 18-10 16h-18z" fill="#4a2f14" />
        <path d="M902 766h56v16h-56z" fill="#452c0c" />
        <path d="M600 754h80M640 776l34-8M792 766v24" stroke="#7d7768" strokeWidth="2" />

        <g stroke="#7f7b6e" fill="none">
          <path d="M572 1004v196" strokeWidth="3" />
          <circle cx="571" cy="992" r="11" strokeWidth="3" />
          <path d="M552 980l18 12 10-14" strokeWidth="2" />
          <path d="M530 1212q30 2 40-14 20 4 40 16M540 1204h60" strokeWidth="3" />
        </g>
        <path d="M530 1216q40 8 80-4l-30-10-20 8z" fill="#1e1810" />
        <circle cx="565" cy="1174" r="5" fill="#b8b4a6" />
      </g>

      {/* rudder block */}
      <path d="M1382 1120h64v7h-64z" fill="#5e4420" />
      <path d="M1382 1127h64v53h-64z" fill="#a96f20" />
      <path d="M1382 1127h64q-30 22-64 4z" fill="#996418" opacity=".7" />
      <path d="M1382 1172h64v8h-64z" fill="#8b5a18" />
      <path d="M1410 1099h8v56h-8z" fill="url(#post)" />
      <circle cx="1317" cy="1119" r="3" fill="#2c2312" stroke="#8a7a50" />

      {/* pointer */}
      <path d="M1820 701v20l5-4 4 8 3-2-4-8h6z" fill="#000" stroke="#fff" strokeWidth="1" />
    </svg>
  )
}

function ViewCube() {
  return (
    <svg viewBox="0 0 130 130" className="w-[130px] h-[130px] mt-[42px] mr-[10px]" role="img" aria-label="View cube, bottom">
      <path d="M11 13h76v75H11z" fill="#d3d4d4" stroke="#a4a4a4" strokeWidth="1.500" />
      <path d="M25 27h49v48H25z" fill="#cdd1d3" />
      <text x="49" y="51" transform="rotate(180 49 51)" textAnchor="middle" dominantBaseline="central" fill="#8e9194" className="font-['Liberation_Sans',sans-serif] text-[17px] font-bold">
        BOTTOM
      </text>
      <path d="M10 12h90" stroke="#c9777c" strokeWidth="1.500" />
      <path d="M10 12v90" stroke="#6bdc79" strokeWidth="1.800" />
      <text x="112" y="19" textAnchor="middle" fill="#dc7c80" className="font-['Liberation_Sans',sans-serif] text-[20px]">X</text>
      <text x="10" y="121" textAnchor="middle" fill="#7fe889" className="font-['Liberation_Sans',sans-serif] text-[20px]">Y</text>
    </svg>
  )
}

// ── Navigation bar ───────────────────────────────────────────────────────────

const NAV = [
  {
    label: 'Orbit',
    menu: 'ml-2 mr-[11px]',
    art: (
      <g stroke="#666" strokeWidth="1.300">
        <ellipse cx="11.500" cy="11" rx="5" ry="10.500" />
        <path d="M15 6c9 2 9 8-2 9M8 7C-1 8-2 14 8 16l3 1" />
        <path d="M11 8v6M8 11h6" stroke="#4a7fc0" />
        <circle cx="14" cy="5" r="1" fill="#222" />
        <circle cx="18" cy="8" r="1" fill="#222" />
      </g>
    ),
  },
  {
    label: 'Look At',
    gap: 'mr-4',
    art: (
      <g stroke="#666" strokeWidth="1.400">
        <path d="M3 8l9-6v5M9 6l7-3v5" fill="#e8e8e8" />
        <path d="M1 8h20v13H1z" fill="#ececec" />
        <path d="M5 12h12v6H5z" fill="#bcbcc2" />
      </g>
    ),
  },
  {
    label: 'Pan',
    gap: 'mr-4',
    art: (
      <path
        d="M7 21C5 17 3 15 1 12c1-2 3-1 5 2L4 5c0-2 2-2 3 0l2 6V2c0-2 3-2 3 0l1 8 2-7c1-2 3-1 2 1l-1 7 3-4c1-2 3-1 2 1-2 4-3 9-5 13z"
        fill="#f8f8f8"
        stroke="#555"
        strokeWidth="1.300"
      />
    ),
  },
  {
    label: 'Zoom',
    gap: 'mr-4',
    art: (
      <>
        <circle cx="8" cy="8" r="7" fill="#eef2f2" stroke="#666" strokeWidth="1.400" />
        <path d="M13 13l8 8" stroke="#333" strokeWidth="3.500" />
        <path d="M19.500 1v5M17 3.500h5M17 8h5" stroke="#555" strokeWidth="1.200" />
      </>
    ),
  },
  {
    label: 'Fit',
    menu: 'ml-2 mr-[10px]',
    art: (
      <>
        <path d="M1 1h20v20H1z" stroke="#777" strokeDasharray="3 2" />
        <circle cx="9" cy="8" r="7" fill="#eef2f2" stroke="#666" strokeWidth="1.400" />
        <path d="M14 13l8 8" stroke="#333" strokeWidth="3.500" />
      </>
    ),
  },
  {
    label: 'Display Settings',
    menu: 'ml-1 mr-[11px]',
    art: (
      <>
        <path d="M1 1h20v15H1z" fill="#f4f4f4" stroke="#666" strokeWidth="1.400" />
        <path d="M3.500 3.500h15v10h-15z" fill="#94b4e2" stroke="#6a7fa4" />
        <path d="M9 16h4v3h3v2H6v-2h3z" fill="#ddd" stroke="#666" />
      </>
    ),
  },
  {
    label: 'Grid and Snaps',
    menu: 'ml-1 mr-[11px]',
    art: (
      <>
        <path d="M1 1h20v20H1z" fill="#eee" stroke="#555" strokeWidth="1.400" />
        <path d="M1 14h20v7H1z" fill="#b8bfd8" />
        <path d="M4.500 1v20M8 1v20M11.500 1v20M15 1v20M18.500 1v20M1 4.500h20M1 8h20M1 11.500h20M1 15h20M1 18.500h20" stroke="#666" strokeWidth=".9" />
      </>
    ),
  },
  {
    label: 'Viewports',
    menu: 'ml-1 mr-[6px]',
    art: (
      <>
        <path d="M0 2h22v18H0z" fill="#8fabd6" stroke="#5f7498" strokeWidth="1.300" />
        <path d="M11 2v18M0 11h22" stroke="#4f6388" strokeWidth="1.500" />
        <path d="M2.500 4.500h6v4h-6zM13.500 4.500h6v4h-6zM2.500 13.500h6v4h-6zM13.500 13.500h6v4h-6z" stroke="#b4c8e8" />
      </>
    ),
  },
]

function NavigationBar() {
  return (
    <div className="flex items-center h-[35px] pl-[5px] mr-[2px] mb-[9px] bg-[#f0f0f0]">
      {NAV.map(({ label, menu, gap, art }) => (
        <button key={label} type="button" aria-label={label} className={clsx('flex items-center', gap)}>
          <Icon box={22} className="w-[22px] h-[22px] overflow-visible">{art}</Icon>
          {menu && (
            <span className={menu}>
              <Caret className="w-2 h-[7px] text-[#2c2c2c]" />
            </span>
          )}
        </button>
      ))}
    </div>
  )
}

function Viewport() {
  return (
    <main className="relative flex flex-col flex-1 justify-between bg-[#fdfdfd]">
      <HullDrawing />
      <div className="relative flex items-start justify-between">
        <BrowserPanel />
        <ViewCube />
      </div>
      <div className="relative grid grid-cols-[1fr_auto_1fr] items-end">
        <div className="flex items-center w-[437px] h-9 ml-[2px] mb-[6px] pl-[34px] pr-[15px] bg-[#f0f0f0] border-2 border-t-0 border-[#d0d0d0]">
          <h2 className="flex-1 text-[16px] leading-6 text-[#5c5c5c]">COMMENTS</h2>
          <PanelToggle plus label="Expand comments" />
        </div>
        <NavigationBar />
        <button type="button" aria-label="Autodesk Assistant" className="justify-self-end mr-4 mb-2">
          <Icon box={24} className="w-6 h-6">
            <path d="M12 0a12 12 0 0 1 12 12v12H12a12 12 0 0 1 0-24z" fill="#000" />
            <path d="M5 13l9-6M5 16l14-8M12 15l6-4M14 17l4-2" stroke="#fff" strokeWidth="1.400" />
          </Icon>
        </button>
      </div>
    </main>
  )
}

// ── Text commands ────────────────────────────────────────────────────────────

function TextCommands() {
  const [mode, setMode] = useState('Txt')

  return (
    <section className="flex flex-col bg-[#f0f0f0] border-t-2 border-[#dadada] font-[Inter,sans-serif]">
      <div className="flex items-center gap-[15px] h-8 pl-[6px]">
        <PanelToggle label="Minimize text commands" />
        <h2 className="font-['Noto_Sans',sans-serif] text-[16px] leading-6 text-[#5c5c5c]">TEXT COMMANDS</h2>
      </div>
      <textarea
        readOnly
        aria-label="Command output"
        className="block h-[139px] mr-[2px] resize-none bg-[#fefefe] border border-t-2 border-[#b8b8b8] border-t-[#a0a0a0] border-l-[#e4e4e4] outline-none"
      />
      <div className="flex items-center h-[45px] pr-[10px] text-[18px] text-[#262626]">
        <input
          type="text"
          aria-label="Text command"
          placeholder="Type Text Commands Here - Type '?' For Help"
          className="flex-1 h-[29px] mr-1 px-[2px] bg-white border-b border-[#cfcfcf] placeholder:text-[#848484] outline-none"
        />
        {['Txt', 'Py', 'Js'].map((name) => (
          <label key={name} className="flex items-center gap-[7px] ml-2 first-of-type:ml-0">
            <input
              type="radio"
              name="mode"
              checked={mode === name}
              onChange={() => setMode(name)}
              className="appearance-none size-5 rounded-full bg-white border border-[#c4c4c4] checked:border-[6px] checked:border-[#3b7fe0]"
            />
            {name}
          </label>
        ))}
      </div>
    </section>
  )
}

export default function App() {
  return (
    <div className="relative flex min-h-screen pt-px pr-[3px] bg-[#73737b] font-['Noto_Sans',sans-serif]">
      {/* desktop wallpaper behind the rounded window corners */}
      <div className="absolute top-0 left-0 size-3 bg-[#2f2850]" />
      <div className="absolute top-0 right-0 size-4 bg-[#3f57a8]" />
      <div className="absolute bottom-0 left-0 size-3 bg-[#1f2a18]" />
      <div className="absolute bottom-0 right-0 size-4 bg-[#5f9d4a]" />

      <div className="relative flex flex-col flex-1 overflow-hidden rounded-xl bg-[#f0f0f0]">
        <TitleBar />
        <DocumentTabs />
        <Ribbon />
        <Viewport />
        <TextCommands />
      </div>
    </div>
  )
}
